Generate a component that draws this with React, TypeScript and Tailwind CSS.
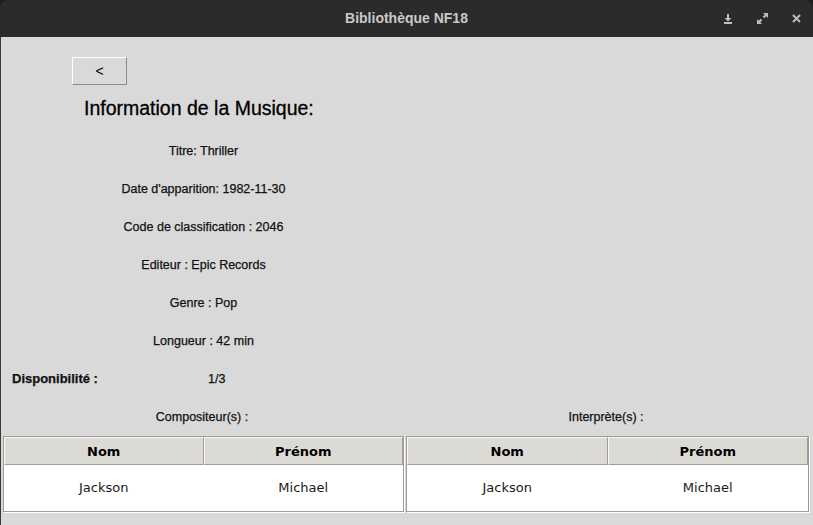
import React from "react";

const infos = [
  "Titre: Thriller",
  "Date d'apparition: 1982-11-30",
  "Code de classification : 2046",
  "Editeur : Epic Records",
  "Genre : Pop",
  "Longueur : 42 min",
];

const people = [{ nom: "Jackson", prenom: "Michael" }];

const Table: React.FC<{ width: string }> = ({ width }) => (
  <div className={`${width} border border-[#a19d96] shadow-[1px_1px_0_#ffffff] bg-white`}>
    <div className="grid grid-cols-2">
      {["Nom", "Prénom"].map((h) => (
        <div
          key={h}
          className="h-[28px] pt-[1px] flex items-center justify-center bg-[#dcdad5] border border-t-[#f7f6f4] border-l-[#f7f6f4] border-b-[#a19d96] border-r-[#a19d96] text-[13px] font-bold text-black"
          style={{ fontFamily: '"DejaVu Sans", sans-serif' }}
        >
          {h}
        </div>
      ))}
    </div>
    {people.map((p, i) => (
      <div
        key={i}
        className="grid grid-cols-2 h-[46px] text-[13px] text-[#1a1a1a]"
        style={{ fontFamily: '"DejaVu Sans", sans-serif' }}
      >
        <div className="flex items-center justify-center">{p.nom}</div>
        <div className="flex items-center justify-center">{p.prenom}</div>
      </div>
    ))}
  </div>
);

const App: React.FC = () => {
  return (
    <div className="w-[813px] h-[525px] bg-[#1c1c24] overflow-hidden flex flex-col">
      <div className="h-[37px] bg-[#2b2b2b] rounded-t-[8px] flex items-center relative shrink-0">
        <div
          className="flex-1 text-center text-[14px] font-bold text-[#c9c9c9]"
          style={{ fontFamily: '"Liberation Sans", sans-serif' }}
        >
          Bibliothèque NF18
        </div>
        <div className="absolute right-[12px] top-0 h-[37px] flex items-center gap-[24px] text-[#bdbdbd]">
          <svg width="10" height="10" viewBox="0 0 10 10" fill="currentColor">
            <rect x="4" y="0" width="2" height="5" />
            <polygon points="1.5,4 8.5,4 5,7.5" />
            <rect x="1" y="8" width="8" height="2" />
          </svg>
          <svg width="11" height="11" viewBox="0 0 11 11" fill="currentColor">
            <polygon points="6,0 11,0 11,5 9.3,3.3 7.3,5.3 5.7,3.7 7.7,1.7" />
            <polygon points="0,6 0,11 5,11 3.3,9.3 5.3,7.3 3.7,5.7 1.7,7.7" />
          </svg>
          <svg width="9" height="9" viewBox="0 0 9 9" stroke="currentColor" strokeWidth="2">
            <line x1="1" y1="1" x2="8" y2="8" />
            <line x1="8" y1="1" x2="1" y2="8" />
          </svg>
        </div>
      </div>

      <div
        className="flex-1 bg-[#d9d9d9] flex flex-col text-[#111] border-l border-[#3a3a3a]"
        style={{ fontFamily: '"Liberation Sans", Arial, sans-serif' }}
      >
        <div className="pt-[20px] pl-[71px]">
          <button className="w-[55px] h-[28px] bg-[#d9d9d9] border border-t-white border-l-white border-b-[#8a8a8a] border-r-[#8a8a8a] text-[14px] text-black flex items-center justify-center">
            &lt;
          </button>
        </div>
        <div className="h-[47px] flex items-center pl-[83px] text-[19.5px] text-black [-webkit-text-stroke:0.3px_#000]">
          Information de la Musique:
        </div>
        <div className="w-[405px] flex flex-col [-webkit-text-stroke:0.25px_#111]">
          {infos.map((t) => (
            <div key={t} className="h-[38px] flex items-center justify-center text-[12.5px]">
              {t}
            </div>
          ))}
          <div className="h-[38px] flex items-center text-[12.5px]">
            <span className="pl-[11px] w-[207px] font-bold text-[13px]">Disponibilité :</span>
            <span>1/3</span>
          </div>
        </div>
        <div className="flex h-[38px] items-center text-[12.5px] [-webkit-text-stroke:0.25px_#111]">
          <div className="w-[402px] text-center">Compositeur(s) :</div>
          <div className="w-[406px] text-center">Interprète(s) :</div>
        </div>
        <div className="flex pl-[2px] gap-[2px]">
          <Table width="w-[401px]" />
          <Table width="w-[403px]" />
        </div>
      </div>
    </div>
  );
};

export default App;
